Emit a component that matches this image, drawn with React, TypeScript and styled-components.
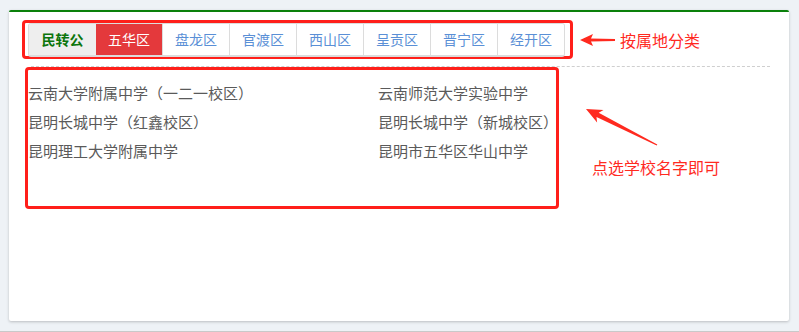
import React from "react";
import styled, { createGlobalStyle } from "styled-components";

const GlobalStyle = createGlobalStyle`
    body {
        margin: 0;
        background: #eef2f6;
        font-family: "Noto Sans CJK SC", "Noto Sans", sans-serif;
    }
`;

const districts = ["五华区", "盘龙区", "官渡区", "西山区", "呈贡区", "晋宁区", "经开区"];

const schools = [
    "云南大学附属中学（一二一校区）",
    "云南师范大学实验中学",
    "昆明长城中学（红鑫校区）",
    "昆明长城中学（新城校区）",
    "昆明理工大学附属中学",
    "昆明市五华区华山中学",
];

const App = () => {
    return (
        <>
            <GlobalStyle />
            <Card>
                <TopRow>
                    <Highlight>
                        <Tabs>
                            <Tab $first>民转公</Tab>
                            {districts.map((d, i) => (
                                <Tab key={d} $active={i === 0}>{d}</Tab>
                            ))}
                        </Tabs>
                    </Highlight>
                    <LeftArrow width="36" height="14" viewBox="0 0 36 14">
                        <path d="M0,7 L13,1 L11,5.5 L35,6 L35,8 L11,8.5 L13,13 Z" fill="#ff2a1f" />
                    </LeftArrow>
                    <Note>按属地分类</Note>
                </TopRow>
                <Divider />
                <BodyRow>
                    <SchoolBox>
                        {schools.map((s) => (
                            <School key={s}>{s}</School>
                        ))}
                    </SchoolBox>
                    <NoteColumn>
                        <svg width="76" height="42" viewBox="0 0 76 42">
                            <path
                                d="M2,3 L19.5,4 L14.7,6.7 L73.3,38.4 L72.7,39.6 L12.5,11.1 L13.1,16.4 Z"
                                fill="#ff2a1f"
                            />
                        </svg>
                        <SideNote>点选学校名字即可</SideNote>
                    </NoteColumn>
                </BodyRow>
            </Card>
            <NextCard />
        </>
    );
};

export default App;

const Card = styled.div`
    box-sizing: border-box;
    margin: 10px 0 0 9px;
    width: 780px;
    height: 311px;
    background: #fff;
    border-top: 2px solid #0a800a;
    border-radius: 2px;
    box-shadow: 0 1px 3px rgba(0, 0, 0, 0.22);
    padding: 8px 19px 0 13px;
`;

const TopRow = styled.div`
    display: flex;
    align-items: center;
`;

const Highlight = styled.div`
    box-sizing: border-box;
    width: 551px;
    height: 39px;
    border: 3px solid #ff1f1a;
    border-radius: 4px;
    padding: 0 3px;
    display: flex;
    align-items: flex-start;
`;

const Tabs = styled.div`
    display: flex;
    margin-top: -0.5px;
    border: 1px solid #dcdcdc;
    border-bottom-width: 2px;
    border-radius: 3px;
    overflow: hidden;
`;

const Tab = styled.div<{ $first?: boolean; $active?: boolean }>`
    box-sizing: border-box;
    width: ${(p) => (p.$first ? 67 : p.$active ? 66 : 67)}px;
    height: 31px;
    display: flex;
    align-items: center;
    justify-content: center;
    font-size: 14px;
    border-left: ${(p) => (p.$first || p.$active ? "none" : "1px solid #dcdcdc")};
    background: ${(p) => (p.$first ? "#eeeeee" : p.$active ? "#e4393c" : "#fff")};
    color: ${(p) => (p.$first ? "#0b750b" : p.$active ? "#fff" : "#5a8fd6")};
    font-weight: ${(p) => (p.$first ? 700 : 400)};
`;

const LeftArrow = styled.svg`
    margin-left: 7px;
    display: block;
`;

const Note = styled.span`
    margin-left: 4px;
    font-size: 16px;
    color: #ff2a1f;
    line-height: 20px;
`;

const Divider = styled.div`
    margin: 7px 0 0 9px;
    border-top: 1px dashed #cfcfcf;
`;

const BodyRow = styled.div`
    display: flex;
    align-items: flex-start;
`;

const SchoolBox = styled.div`
    box-sizing: border-box;
    margin-left: 3px;
    width: 534px;
    height: 142px;
    border: 3px solid #ff1f1a;
    border-radius: 4px;
    padding-top: 8px;
    display: grid;
    grid-template-columns: 350px 1fr;
    grid-auto-rows: 29px;
    align-content: start;
`;

const School = styled.div`
    font-size: 15px;
    line-height: 29px;
    color: #5a5a5a;
    white-space: nowrap;
    cursor: pointer;
`;

const NoteColumn = styled.div`
    display: flex;
    flex-direction: column;
    padding: 39px 0 0 25px;
`;

const SideNote = styled.div`
    margin: 9px 0 0 8px;
    font-size: 16px;
    line-height: 20px;
    color: #ff2a1f;
    white-space: nowrap;
`;

const NextCard = styled.div`
    margin-top: 10px;
    height: 1px;
    background: #c9c9c9;
`;
